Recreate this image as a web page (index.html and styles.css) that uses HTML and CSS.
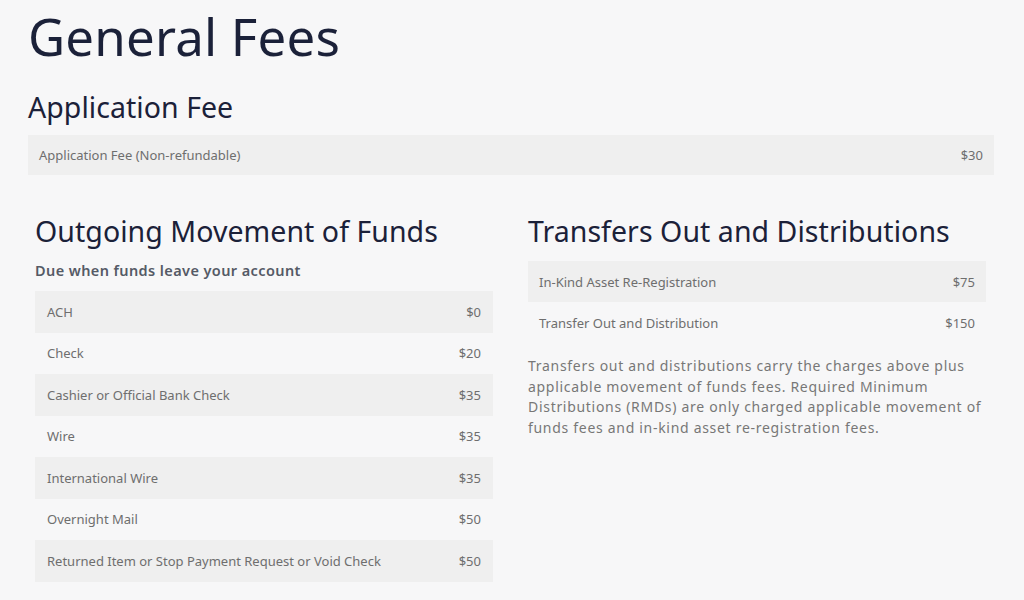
FILE: index.html
```html
<!DOCTYPE html>
<html lang="en">
<head>
<meta charset="utf-8">
<title>General Fees</title>
<link rel="stylesheet" href="styles.css">
</head>
<body>
<main class="page">
  <h1 class="title">General Fees</h1>
  <section class="section">
    <h2 class="heading">Application Fee</h2>
    <div class="table">
      <div class="row"><span>Application Fee (Non-refundable)</span><span>$30</span></div>
    </div>
  </section>
  <div class="columns">
    <section class="col">
      <h2 class="heading">Outgoing Movement of Funds</h2>
      <p class="sub">Due when funds leave your account</p>
      <div class="table tall">
        <div class="row"><span>ACH</span><span>$0</span></div>
        <div class="row"><span>Check</span><span>$20</span></div>
        <div class="row"><span>Cashier or Official Bank Check</span><span>$35</span></div>
        <div class="row"><span>Wire</span><span>$35</span></div>
        <div class="row"><span>International Wire</span><span>$35</span></div>
        <div class="row"><span>Overnight Mail</span><span>$50</span></div>
        <div class="row"><span>Returned Item or Stop Payment Request or Void Check</span><span>$50</span></div>
      </div>
    </section>
    <section class="col">
      <h2 class="heading">Transfers Out and Distributions</h2>
      <div class="table mid">
        <div class="row"><span>In-Kind Asset Re-Registration</span><span>$75</span></div>
        <div class="row"><span>Transfer Out and Distribution</span><span>$150</span></div>
      </div>
      <p class="note">Transfers out and distributions carry the charges above plus applicable movement of funds fees. Required Minimum Distributions (RMDs) are only charged applicable movement of funds fees and in-kind asset re-registration fees.</p>
    </section>
  </div>
</main>
</body>
</html>
```

FILE: styles.css
```css
html, body {
  margin: 0;
  padding: 0;
  background: #f7f7f8;
}
body {
  font-family: "Noto Sans", "Liberation Sans", sans-serif;
  color: #1b2139;
}
.page {
  padding: 0 30px 0 28px;
}
.title {
  margin: 0;
  padding-top: 4px;
  font-size: 51px;
  font-weight: 400;
  line-height: 64px;
  letter-spacing: 0.2px;
}
.heading {
  margin: 0;
  font-size: 28.5px;
  font-weight: 400;
  line-height: 36px;
  letter-spacing: 0.05px;
}
.section .heading {
  margin-top: 21px;
  margin-bottom: 10px;
}
.table .row:nth-child(odd) {
  background: #efefef;
}
.row {
  display: flex;
  justify-content: space-between;
  align-items: center;
  height: 40px;
  padding: 0 11px;
  font-size: 13px;
  color: #6e6e6e;
}
.mid .row {
  height: 41px;
}
.tall .row {
  height: 41.5px;
  padding: 0 12px;
}
.columns {
  display: grid;
  grid-template-columns: 1fr 1fr;
  gap: 20px;
  margin-top: 38px;
}
.col {
  padding: 0 8px 0 7px;
}
.sub {
  margin: 11px 0 11px;
  font-size: 14.5px;
  font-weight: 600;
  letter-spacing: 0.4px;
  color: #555a66;
}
.col .heading + .table {
  margin-top: 12px;
}
.note {
  margin: 13px 0 0;
  font-size: 14px;
  line-height: 20.5px;
  letter-spacing: 0.7px;
  color: #777;
}
```
